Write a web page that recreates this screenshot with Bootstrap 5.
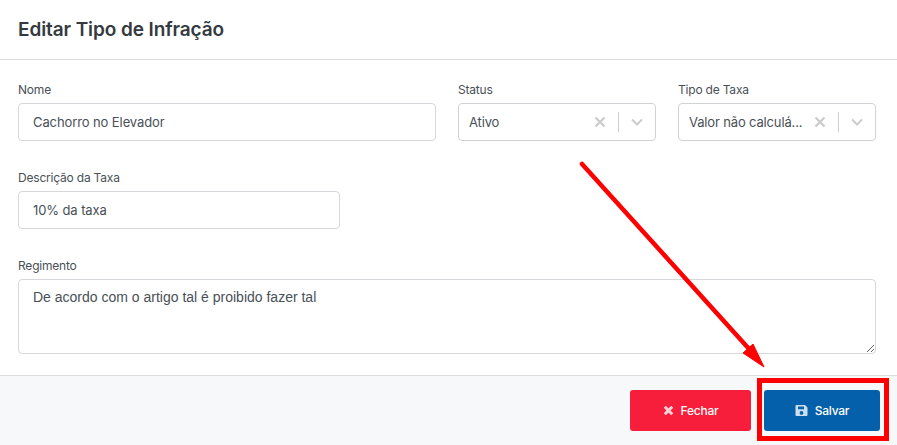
<!DOCTYPE html>
<html lang="pt-BR">
<head>
<meta charset="utf-8">
<title>Editar Tipo de Infração</title>
<link href="https://cdn.jsdelivr.net/npm/bootstrap@5.3.0/dist/css/bootstrap.min.css" rel="stylesheet">
<style>
html,body{height:100%;}
body{width:897px;height:445px;overflow:hidden;position:relative;background:#fff;font-family:"Inter","Liberation Sans",sans-serif;color:#495057;}
.shell{height:445px;display:flex;flex-direction:column;}
.head-bar{height:60px;border-bottom:1px solid #dcdcdc;padding:1px 18px 0;display:flex;align-items:center;}
.head-title{font-size:19px;font-weight:600;color:#343a40;margin:0;letter-spacing:-.1px;}
.form-area{flex:1;padding:22px 21px 0 18px;}
.form-row{--bs-gutter-x:22px;--bs-gutter-y:0;}
.fld{margin-bottom:29px;}
.fld-label{display:block;font-size:12px;line-height:16px;margin-bottom:5px;color:#495057;letter-spacing:-.2px;}
.fld-input{height:38px;border:1px solid #d6d8db;border-radius:4px;font-size:13px;color:#495057;padding:0 14px;font-family:inherit;letter-spacing:-.1px;}
.fld-desc{width:344px;flex:0 0 auto;}
.fld-area{height:75px;border:1px solid #d6d8db;border-radius:4px;font-size:14px;color:#495057;padding:7px 14px;font-family:"Liberation Sans",sans-serif;line-height:21px;}
.sel-box{height:38px;border:1px solid #d0d3d6;border-radius:4px;display:flex;align-items:center;padding-left:10px;font-size:13px;letter-spacing:-.15px;}
.sel-val{flex:1;white-space:nowrap;min-width:0;padding-top:1px;}
.sel-x{width:36px;flex:none;display:flex;justify-content:center;}
.sel-sep{width:1px;height:20px;flex:none;background:#ccc;}
.sel-arrow{width:36px;flex:none;display:flex;justify-content:center;}
.foot-bar{height:70px;background:#f7f8fa;border-top:1px solid #dcdcdc;display:flex;justify-content:flex-end;align-items:flex-start;gap:13px;padding:14px 17px 0 0;}
.act-btn{height:41px;border:0;border-radius:3px;color:#fff;font-size:12px;font-weight:500;display:flex;align-items:center;justify-content:center;gap:7px;padding:0;letter-spacing:-.25px;}
.act-close{width:121px;background:#f61e3a;}
.act-save{width:116px;background:#0460ab;}
.act-close:hover{background:#f61e3a;color:#fff;}
.act-save:hover{background:#0460ab;color:#fff;}
.mark-box{position:absolute;left:757px;top:378px;width:132px;height:63px;border:5px solid #f00;}
.mark-arrow{position:absolute;left:0;top:0;pointer-events:none;}
</style>
</head>
<body>
<div class="shell">
  <div class="head-bar"><h5 class="head-title">Editar Tipo de Infração</h5></div>
  <div class="form-area">
    <div class="row form-row">
      <div class="col-6 fld">
        <label class="fld-label">Nome</label>
        <input class="form-control fld-input" value="Cachorro no Elevador">
      </div>
      <div class="col-3 fld">
        <label class="fld-label">Status</label>
        <div class="sel-box"><span class="sel-val">Ativo</span>
          <span class="sel-x"><svg width="12" height="12" viewBox="0 0 12 12"><path d="M1.5 1.5l9 9M10.5 1.5l-9 9" stroke="#ccc" stroke-width="2.4" fill="none"/></svg></span>
          <span class="sel-sep"></span>
          <span class="sel-arrow"><svg width="12" height="8" viewBox="0 0 12 8"><path d="M1 1.5l5 5 5-5" stroke="#ccc" stroke-width="2" fill="none"/></svg></span>
        </div>
      </div>
      <div class="col-3 fld">
        <label class="fld-label">Tipo de Taxa</label>
        <div class="sel-box"><span class="sel-val">Valor não calculá...</span>
          <span class="sel-x"><svg width="12" height="12" viewBox="0 0 12 12"><path d="M1.5 1.5l9 9M10.5 1.5l-9 9" stroke="#ccc" stroke-width="2.4" fill="none"/></svg></span>
          <span class="sel-sep"></span>
          <span class="sel-arrow"><svg width="12" height="8" viewBox="0 0 12 8"><path d="M1 1.5l5 5 5-5" stroke="#ccc" stroke-width="2" fill="none"/></svg></span>
        </div>
      </div>
      <div class="fld fld-desc">
        <label class="fld-label">Descrição da Taxa</label>
        <input class="form-control fld-input" value="10% da taxa">
      </div>
      <div class="w-100"></div>
      <div class="col-12">
        <label class="fld-label">Regimento</label>
        <textarea class="form-control fld-area">De acordo com o artigo tal é proibido fazer tal</textarea>
      </div>
    </div>
  </div>
  <div class="foot-bar">
    <button class="btn act-btn act-close" type="button"><svg width="11" height="11" viewBox="0 0 11 11"><path d="M1.8 1.8l7.4 7.4M9.2 1.8L1.8 9.2" stroke="#fff" stroke-opacity=".8" stroke-width="3" fill="none"/></svg>Fechar</button>
    <button class="btn act-btn act-save" type="button"><svg width="13" height="13" viewBox="0 0 13 13"><path fill="#fff" fill-opacity=".8" fill-rule="evenodd" d="M1.5 1H10l2.5 2.5V11a1 1 0 0 1-1 1h-10a1 1 0 0 1-1-1V2a1 1 0 0 1 1-1zM3 2.5V5.2h6V2.5zM6.5 7a1.9 1.9 0 1 0 0 3.8 1.9 1.9 0 0 0 0-3.8z"/></svg>Salvar</button>
  </div>
</div>
<div class="mark-box"></div>
<svg class="mark-arrow" width="897" height="445" viewBox="0 0 897 445">
  <path d="M582 164L750 350" stroke="#f00" stroke-width="4.5" stroke-linecap="round" fill="none"/>
  <path d="M764 367L743 353L753 344Z" fill="#f00" stroke="#f00" stroke-width="1"/>
</svg>
<script src="https://cdn.jsdelivr.net/npm/bootstrap@5.3.0/dist/js/bootstrap.bundle.min.js"></script>
</body>
</html>
